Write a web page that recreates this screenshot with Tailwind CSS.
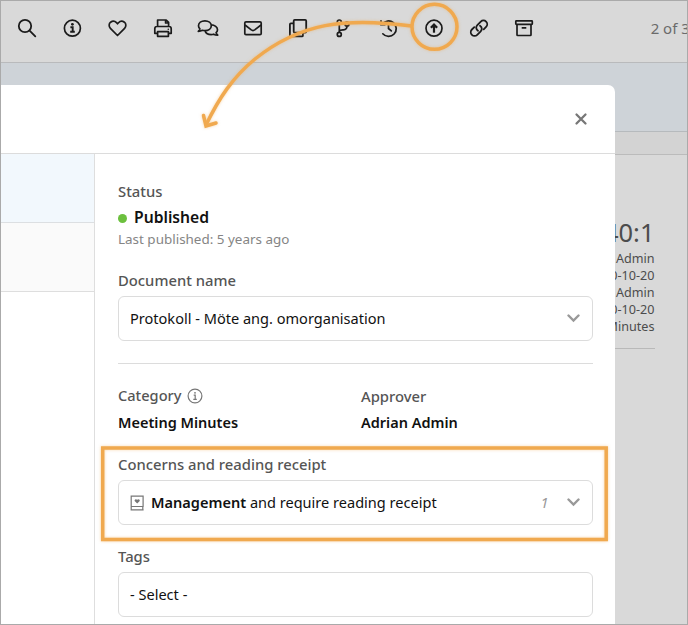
<!DOCTYPE html>
<html lang="en">
<head>
<meta charset="utf-8">
<title>Publish document</title>
<script src="https://cdn.jsdelivr.net/npm/@tailwindcss/browser@4"></script>
</head>
<body class="relative h-[625px] w-[688px] overflow-hidden bg-[#d9d9d9] font-['Noto_Sans',sans-serif] text-[14.550px] text-[#111]">
  <!-- Toolbar -->
  <header class="flex h-[63px] items-start border-b border-[#b9babc] pt-4 pl-[4.4px] text-[#1b1b1b]">
    <div class="flex *:flex *:h-6 *:w-[45.2px] *:justify-center">
      <div><svg width="24" height="24" fill="none" stroke="currentColor" stroke-width="1.8" stroke-linecap="round"><circle cx="10" cy="10" r="6.2"/><path d="M14.6 14.6 20.3 20.3"/></svg></div>
      <div><svg width="24" height="24" fill="none" stroke="currentColor" stroke-width="1.7"><circle cx="12.4" cy="12.2" r="8"/><path d="M10.400 11.200h2.300v4.400M10.200 15.800h4.600" stroke-width="1.900"/><circle cx="12.400" cy="8.300" r="1.400" fill="currentColor" stroke="none"/></svg></div>
      <div><svg width="24" height="24" fill="none" stroke="currentColor" stroke-width="1.7" stroke-linejoin="round"><path d="M12.500 19.500 5.400 12.300C3.600 10.400 3.800 7.600 5.600 6.200 7.500 4.800 10 5.100 11.500 6.700L12.500 7.800 13.500 6.700C15 5.100 17.500 4.800 19.400 6.200 21.200 7.600 21.400 10.400 19.600 12.300Z"/></svg></div>
      <div><svg width="24" height="24" fill="none" stroke="currentColor" stroke-width="1.7" stroke-linejoin="round"><path d="M6.600 10.500V4h8.600l2.400 2.400v4.100M14.600 4v3h3M6.500 17.300H3.800v-4.600c0-1.300.9-2.200 2.200-2.200h12c1.300 0 2.200.9 2.200 2.200v4.600h-2.700M6.600 15.600h10.800v4.700H6.600Z"/><circle cx="17.300" cy="13.200" r=".8" fill="currentColor" stroke="none"/></svg></div>
      <div><svg width="24" height="24" fill="none" stroke="currentColor" stroke-width="1.7" stroke-linejoin="round"><path d="M2.300 15.300c1-.9 1.500-1.800 1.600-2.500C3 11.900 2.500 10.900 2.500 9.800 2.500 7 5.300 4.900 8.900 4.900s6.400 2.100 6.400 4.900-2.800 4.900-6.400 4.900c-.9 0-1.700-.1-2.500-.4-1.200.7-2.600 1-4.100 1Z"/><path d="M15.300 8.900c3.400.1 6.200 2.200 6.200 4.800 0 1.200-.5 2.200-1.400 3 .1.700.7 1.600 1.600 2.500-1.500 0-2.900-.3-4.100-1-.8.3-1.600.4-2.500.4-2.800 0-5.200-1.300-6-3.500"/></svg></div>
      <div><svg width="24" height="24" fill="none" stroke="currentColor" stroke-width="1.7" stroke-linejoin="round"><rect x="3.800" y="5.800" width="16.400" height="12.800" rx="1.200"/><path d="M4 9l6.300 4.900c1.100.8 2.300.8 3.400 0L20 9"/></svg></div>
      <div><svg width="24" height="24" fill="none" stroke="currentColor" stroke-width="1.800" stroke-linejoin="round"><rect x="7.700" y="3.900" width="12.500" height="12.700" rx="1"/><path d="M7.500 7.400H4.900c-.6 0-1 .4-1 1v11c0 .6.400 1 1 1h11c.6 0 1-.4 1-1v-2.600"/></svg></div>
      <div><svg width="24" height="24" fill="none" stroke="currentColor" stroke-width="1.700"><circle cx="8.300" cy="6" r="2"/><circle cx="8.300" cy="18.400" r="2"/><circle cx="16" cy="8" r="2"/><path d="M8.300 8v8.400M16 10c0 3-1.300 3.700-3.500 3.900-2.200.2-3.600.2-4.200 1.300"/></svg></div>
      <div><svg width="24" height="24" fill="none" stroke="currentColor" stroke-width="1.700" stroke-linecap="round"><path d="M6.200 8.300A7.700 7.700 0 1 1 6.800 17.800M5 4.800v3.800h4M12.500 8v4.500l2.800 2.400"/></svg></div>
      <div><svg width="24" height="24" fill="none" stroke="currentColor" stroke-width="1.700"><circle cx="12" cy="12.200" r="8"/><path d="M12 16.700V9" stroke-width="2.200"/><path d="M8.900 11.700 12 8.600l3.100 3.100" stroke-width="2.300"/></svg></div>
      <div><svg width="24" height="24" fill="none" stroke="currentColor" stroke-width="1.800" stroke-linecap="round"><path d="M11 14.700c-2.200-1.500-2.300-4-.7-5.600l3.500-3.500a3.700 3.700 0 0 1 5.300 5.300l-2.400 2.400M13 9.700c2.200 1.500 2.300 4 .7 5.600l-3.500 3.500a3.700 3.700 0 0 1-5.300-5.300l2.400-2.400"/></svg></div>
      <div><svg width="24" height="24" fill="none" stroke="currentColor" stroke-width="1.700" stroke-linejoin="round"><rect x="3.800" y="4.800" width="16.500" height="3.500" rx=".6"/><path d="M5 8.500v10.300c0 .4.300.7.700.7h12.600c.4 0 .7-.3.7-.7V8.500M9.700 11.900h4.600"/></svg></div>
    </div>
    <span class="ml-[104px] whitespace-nowrap text-[15px] leading-6 text-[#6b6b6b]">2 of 3</span>
  </header>
  <div class="h-[69px] border-b border-[#b6babd] bg-[#ced3d8]"></div>
  <div class="h-[23px] border-b border-[#bbb] bg-[#d3d3d3]"></div>

  <!-- Document details behind the dialog -->
  <aside class="mr-[33.500px] flex flex-col items-end pt-[59px] text-[12.600px] leading-[17px] text-[#4c4c4c]">
    <div class="text-[25.500px] leading-9">2040:1</div>
    <div>Adrian Admin</div>
    <div>2020-10-20</div>
    <div>Adrian Admin</div>
    <div>2020-10-20</div>
    <div>Meeting Minutes</div>
    <div class="mt-[13px] h-px w-40 bg-[#b9b9b9]"></div>
  </aside>

  <!-- Dialog -->
  <section class="absolute top-[85px] left-0 flex h-[540px] w-[615px] flex-col rounded-tr-[7px] bg-white">
    <div class="flex h-[69px] shrink-0 items-center justify-end border-b border-[#dcdcdc] pr-[27px]">
      <svg width="14" height="14" fill="none" stroke="#777" stroke-width="2.300" stroke-linecap="round"><path d="M2.500 2.500l9 9M11.500 2.500l-9 9"/></svg>
    </div>
    <div class="flex flex-1">
      <nav class="w-[95px] border-r border-[#dedede]">
        <div class="h-[69px] border-b border-[#dcdfe2] bg-[#f2f8fd]"></div>
        <div class="h-[69px] border-b border-[#dedede] bg-[#fafafa]"></div>
      </nav>
      <div class="flex w-[497.500px] flex-col pt-[26px] pl-[23px]">
        <div class="h-[22px] text-[14.800px] font-medium leading-[22px] text-[#555]">Status</div>
        <div class="mt-1 flex h-6 items-center gap-[7px] text-[15.700px] font-semibold"><span class="size-[9px] rounded-full bg-[#6cc03e]"></span>Published</div>
        <div class="h-5 text-[13.450px] leading-[18px] text-[#858585]">Last published: 5 years ago</div>
        <div class="mt-[19px] h-[22px] text-[14.800px] font-medium leading-[22px] text-[#555]">Document name</div>
        <div class="mt-[5px] flex h-[45px] items-center justify-between rounded-[6px] border border-[#dcdcdc] pr-3 pl-[11px]">Protokoll - Möte ang. omorganisation
          <svg width="13" height="9" fill="none" stroke="#999" stroke-width="2.400" stroke-linecap="round"><path d="M1.500 1.500l5 5 5-5"/></svg>
        </div>
        <div class="mt-[22px] h-px bg-[#dcdcdc]"></div>
        <div class="mt-[21px] grid grid-cols-[243px_1fr]">
          <div class="flex h-[22px] items-center gap-[6px] text-[14.600px] font-medium text-[#555]">Category
            <svg width="16" height="16" fill="none" stroke="#777" stroke-width="1.200"><circle cx="8" cy="8" r="6.900"/><path d="M6.700 7.200h1.500v4M6.300 11.300h3.500"/><circle cx="8" cy="4.800" r=".9" fill="#777" stroke="none"/></svg>
          </div>
          <div class="h-[22px] text-[14.800px] font-medium leading-[22px] text-[#555]">Approver</div>
          <div class="mt-1 h-[22px] text-[14.500px] font-semibold leading-[22px]">Meeting Minutes</div>
          <div class="mt-1 h-[22px] text-[14.500px] font-semibold leading-[22px]">Adrian Admin</div>
        </div>
        <div class="mt-5 h-[22px] text-[14.800px] font-medium leading-[22px] text-[#555]">Concerns and reading receipt</div>
        <div class="mt-[5px] flex h-[45px] items-center rounded-[6px] border border-[#dcdcdc] pr-3 pl-[11px]">
          <svg width="14" height="16" fill="none" stroke="#777" stroke-width="1.200"><path d="M1.200 1.200H13.100V11.500H1.200ZM1.200 11.500v3.300H13.600M12.800 11.500v3.300"/><path d="M7.200 8.600 4.900 6.300c-1.100-1.500.9-3 2.300-1.500 1.400-1.500 3.400 0 2.300 1.500Z" fill="#777" stroke="none"/></svg>
          <span class="ml-[7px] flex-1 whitespace-nowrap"><b class="font-semibold">Management</b> and require reading receipt</span>
          <i class="mr-[18px] text-[#999]">1</i>
          <svg width="13" height="9" fill="none" stroke="#999" stroke-width="2.400" stroke-linecap="round"><path d="M1.500 1.500l5 5 5-5"/></svg>
        </div>
        <div class="mt-[20px] h-[22px] text-[14.800px] font-medium leading-[22px] text-[#555]">Tags</div>
        <div class="mt-[5px] flex h-[45px] shrink-0 items-center rounded-[6px] border border-[#dcdcdc] pl-[11px]">- Select -</div>
      </div>
    </div>
  </section>

  <!-- Annotations -->
  <svg class="absolute inset-0 drop-shadow-[0_0_1.500px_rgba(240,170,80,0.5)]" width="688" height="625" fill="none" stroke="#f0a94f" stroke-width="3.500">
    <circle cx="434.500" cy="26.800" r="22.500"/>
    <path d="M411.500 26C345 17 300 23 255 59 233 77 219 98 206 125"/>
    <path d="M203.500 115.500 206 126 216 123" stroke-linecap="round"/>
    <rect x="102.700" y="448" width="503.500" height="91.500"/>
  </svg>
  <div class="pointer-events-none absolute inset-0 border border-[#aaa]"></div>
</body>
</html>
